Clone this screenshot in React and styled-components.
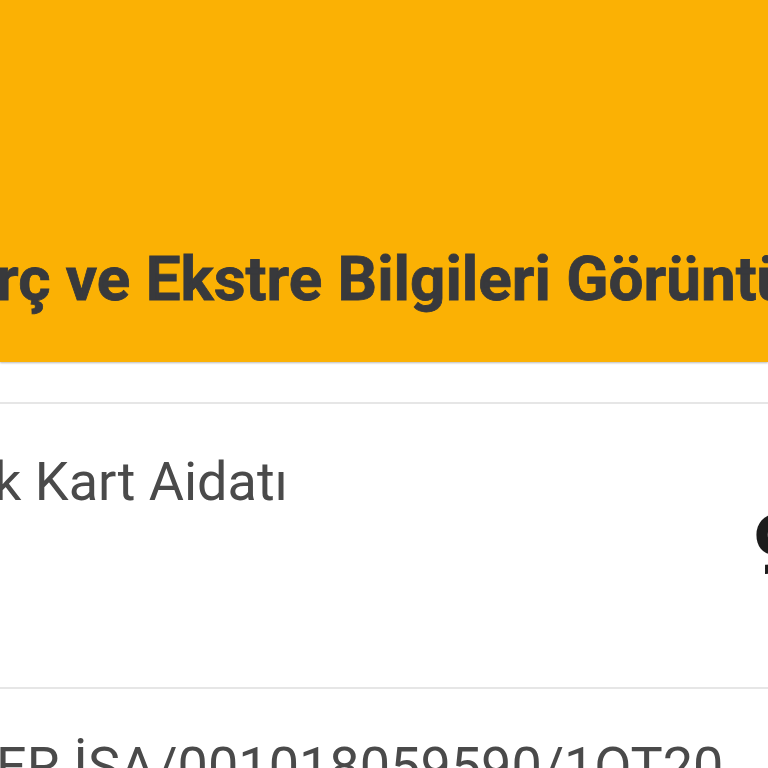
import React from 'react'
import styled, { createGlobalStyle } from 'styled-components'

const GlobalStyle = createGlobalStyle`
    html, body {
        margin: 0;
        padding: 0;
        background: #ffffff;
        overflow: hidden;
    }
    body {
        font-family: Roboto, "Noto Sans", "Liberation Sans", sans-serif;
    }
`;

const Page = styled.div`
    width: 768px;
    height: 768px;
    overflow: hidden;
    display: flex;
    flex-direction: column;
`;

const Header = styled.header`
    height: 362px;
    flex: none;
    box-sizing: border-box;
    background-color: #fbb104;
    box-shadow: 0 1px 2px rgba(0, 0, 0, 0.28);
    display: flex;
    align-items: flex-end;
    padding-bottom: 45px;
    position: relative;
    z-index: 1;
`;

const Title = styled.h1`
    margin: 0;
    font-size: 62px;
    line-height: 76px;
    font-weight: 700;
    color: #38393c;
    -webkit-text-stroke: 0.8px #38393c;
    white-space: nowrap;
    text-indent: -4px;
`;

const List = styled.div`
    margin-top: 40px;
    border-top: 2px solid #e6e6e6;
`;

const Row = styled.div`
    display: flex;
    align-items: ${p => (p.$tall ? 'stretch' : 'flex-start')};
    min-height: ${p => (p.$tall ? '285px' : '0')};
    box-sizing: border-box;
    padding-top: 46px;
    border-bottom: 2px solid #e6e6e6;
`;

const Label = styled.div`
    flex: 1;
    font-size: 54px;
    line-height: 64px;
    color: #4a4a4a;
    white-space: nowrap;
    text-indent: ${p => p.$indent}px;
`;

const Amount = styled.div`
    flex: none;
    width: 15px;
    align-self: center;
    margin-top: -46px;
    font-size: 81px;
    line-height: 90px;
    font-weight: 700;
    color: #1c1c1c;
    white-space: nowrap;
`;

export default function App() {
    return (
        <Page>
            <GlobalStyle />
            <Header>
                <Title>rç ve Ekstre Bilgileri Görüntüle</Title>
            </Header>
            <List>
                <Row $tall>
                    <Label $indent={-6}>k Kart Aidatı</Label>
                    <Amount>9,99 TL</Amount>
                </Row>
                <Row>
                    <Label $indent={-4}>ER İSA/001018059590/1QT20</Label>
                </Row>
            </List>
        </Page>
    )
}
